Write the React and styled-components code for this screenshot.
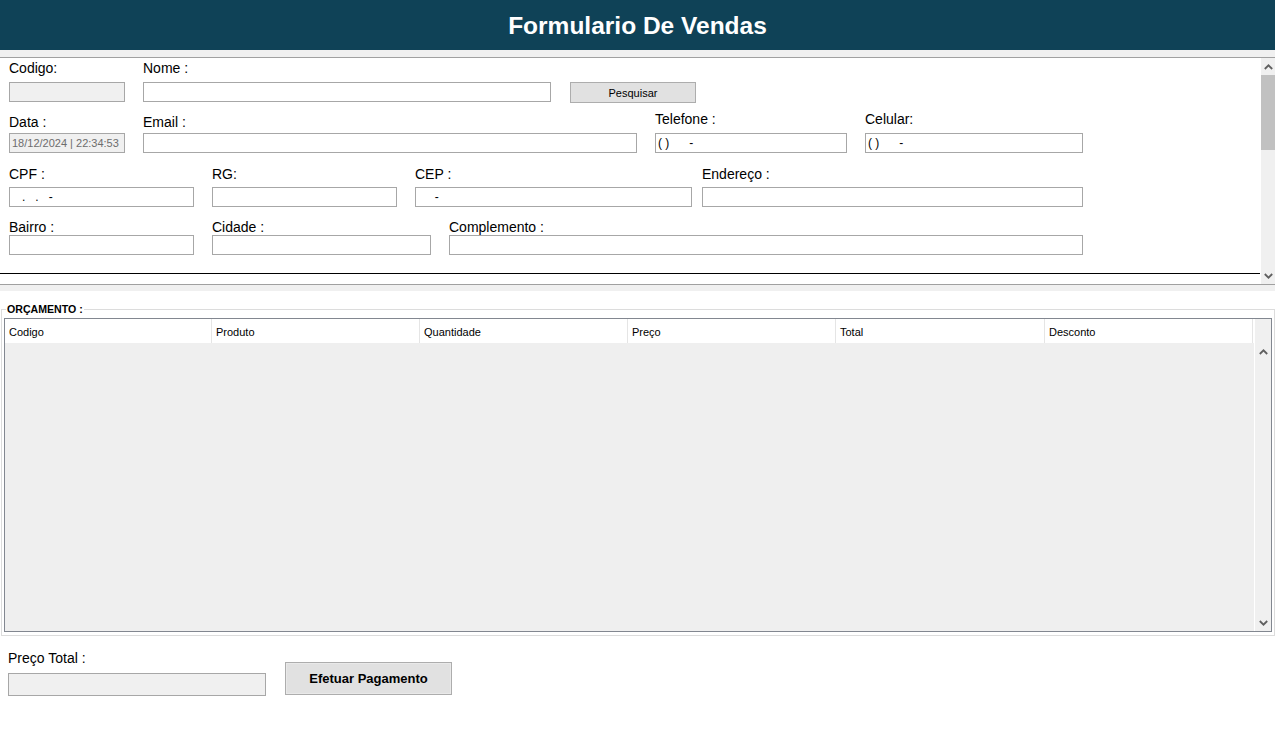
import React from "react";
import styled, { createGlobalStyle } from "styled-components";

const GlobalStyle = createGlobalStyle`
  html, body { margin: 0; padding: 0; background: #fff; }
  body { font-family: "Liberation Sans", Arial, sans-serif; color: #000; }
  * { box-sizing: border-box; }
`;

const Page = styled.div`
  display: flex;
  flex-direction: column;
  height: 733px;
  overflow: hidden;
  background: #fff;
`;

const Header = styled.header`
  height: 50px;
  flex: none;
  background: #0f4257;
  display: flex;
  align-items: center;
  justify-content: center;
`;

const Title = styled.h1`
  margin: 0;
  padding-top: 2px;
  color: #fff;
  font-family: "Liberation Sans", Arial, sans-serif;
  font-weight: 700;
  font-size: 24.5px;
  line-height: 28px;
`;

const Strip = styled.div`
  height: ${(p) => p.$h}px;
  flex: none;
  background: #f0f0f0;
`;

const Panel = styled.section`
  height: 228px;
  flex: none;
  display: flex;
  background: #fff;
  border-top: 1px solid #a0a0a0;
  border-bottom: 1px solid #a0a0a0;
`;

const FormArea = styled.div`
  flex: 1;
  min-width: 0;
  display: flex;
  flex-direction: column;
  padding-top: 2px;
`;

const Row = styled.div`
  display: flex;
  align-items: ${(p) => p.$align || "flex-end"};
  gap: 18px;
  padding-left: 9px;
  margin-top: ${(p) => p.$mt || 0}px;
`;

const Field = styled.div`
  display: flex;
  flex-direction: column;
  flex: none;
  width: ${(p) => p.$w}px;
  margin-left: ${(p) => p.$ml || 0}px;
`;

const Label = styled.label`
  font-size: 14px;
  line-height: 16px;
  height: 16px;
  white-space: nowrap;
  margin-bottom: ${(p) => p.$gap || 0}px;
`;

const TextBox = styled.input`
  display: block;
  width: 100%;
  height: ${(p) => p.$h || 20}px;
  margin: 0;
  padding: 0 1px 0 2px;
  border: 1px solid #a7a7a7;
  border-radius: 0;
  outline: none;
  background: ${(p) => (p.$disabled ? "#f0f0f0" : "#fff")};
  color: ${(p) => (p.$disabled ? "#6d6d6d" : "#000")};
  font-family: "Liberation Sans", Arial, sans-serif;
  font-size: ${(p) => p.$fs || 12}px;
`;

const SmallButton = styled.button`
  flex: none;
  width: 126px;
  height: 21px;
  margin: 22px 0 0 1px;
  padding: 0;
  background: #e1e1e1;
  border: 1px solid #adadad;
  border-radius: 0;
  font-family: "Liberation Sans", Arial, sans-serif;
  font-size: 11px;
  color: #000;
`;

const Divider = styled.div`
  height: 1px;
  margin: 18px 1px 0 0;
  background: #000;
`;

const VScroll = styled.div`
  width: ${(p) => p.$w}px;
  flex: none;
  display: flex;
  flex-direction: column;
  background: #f0f0f0;
  border-left: ${(p) => (p.$line ? "1px solid #fff" : "none")};
`;

const ArrowBox = styled.div`
  height: 17px;
  flex: none;
  display: flex;
  align-items: center;
  justify-content: center;
`;

const Thumb = styled.div`
  height: 75px;
  flex: none;
  background: #c1c1c1;
`;

const Track = styled.div`
  flex: 1;
`;

const HeadFiller = styled.div`
  height: 24px;
  flex: none;
  background: #f0f0f0;
`;

const GroupWrap = styled.div`
  height: 345px;
  flex: none;
  padding: 12px 0 0 1px;
  background: #fff;
`;

const GroupBox = styled.fieldset`
  height: 333px;
  margin: 0;
  padding: 2px 2px 3px 2px;
  border: 1px solid #dcdcdc;
  min-width: 0;
`;

const Legend = styled.legend`
  margin-left: 2px;
  padding: 0 1px;
  font-size: 10.6px;
  line-height: 13px;
  font-weight: 700;
`;

const Grid = styled.div`
  height: 314px;
  display: flex;
  border: 1px solid #828790;
  background: #efefef;
`;

const GridMain = styled.div`
  flex: 1;
  min-width: 0;
  display: flex;
  flex-direction: column;
`;

const HeaderRow = styled.div`
  height: 24px;
  flex: none;
  display: flex;
  background: #fff;
`;

const HeadCell = styled.div`
  width: ${(p) => p.$w}px;
  flex: none;
  height: 24px;
  padding: 1px 0 0 4px;
  font-size: 11px;
  line-height: 24px;
  border-right: 1px solid #e5e5e5;
  white-space: nowrap;
`;

const GridBody = styled.div`
  flex: 1;
  background: #efefef;
`;

const Footer = styled.div`
  flex: 1;
  display: flex;
  align-items: flex-start;
  gap: 19px;
  padding: 14px 0 0 8px;
  background: #fff;
`;

const PayButton = styled.button`
  flex: none;
  width: 167px;
  height: 33px;
  margin: 12px 0 0 0;
  padding: 0;
  background: #e1e1e1;
  border: 1px solid #adadad;
  box-shadow: inset 0 0 0 1px #e9e9e9;
  border-radius: 0;
  font-family: "Liberation Sans", Arial, sans-serif;
  font-size: 13px;
  font-weight: 700;
  color: #000;
`;

const Chevron = ({ down }) => (
  <svg width="9" height="6" viewBox="0 0 9 6">
    <polyline
      points={down ? "0.8,1 4.5,4.7 8.2,1" : "0.8,5 4.5,1.3 8.2,5"}
      fill="none"
      stroke="#606060"
      strokeWidth="1.8"
    />
  </svg>
);

const columns = [
  ["Codigo", 207],
  ["Produto", 208],
  ["Quantidade", 208],
  ["Preço", 208],
  ["Total", 209],
  ["Desconto", 208],
];

export default function App() {
  return (
    <Page>
      <GlobalStyle />
      <Header>
        <Title>Formulario De Vendas</Title>
      </Header>
      <Strip $h={7} />
      <Panel>
        <FormArea>
          <Row $align="flex-start">
            <Field $w={116}>
              <Label $gap={6}>Codigo:</Label>
              <TextBox $disabled readOnly defaultValue="" />
            </Field>
            <Field $w={408}>
              <Label $gap={6}>Nome :</Label>
              <TextBox readOnly defaultValue="" />
            </Field>
            <SmallButton>Pesquisar</SmallButton>
          </Row>
          <Row $mt={8}>
            <Field $w={116}>
              <Label $gap={3}>Data :</Label>
              <TextBox $disabled $fs={11} readOnly defaultValue="18/12/2024 | 22:34:53" />
            </Field>
            <Field $w={494}>
              <Label $gap={3}>Email :</Label>
              <TextBox readOnly defaultValue="" />
            </Field>
            <Field $w={192}>
              <Label $gap={6}>Telefone :</Label>
              <TextBox readOnly defaultValue="( )      -" />
            </Field>
            <Field $w={218}>
              <Label $gap={6}>Celular:</Label>
              <TextBox readOnly defaultValue="( )      -" />
            </Field>
          </Row>
          <Row $mt={13}>
            <Field $w={185}>
              <Label $gap={5}>CPF :</Label>
              <TextBox readOnly defaultValue="   .   .   -" />
            </Field>
            <Field $w={185}>
              <Label $gap={5}>RG:</Label>
              <TextBox readOnly defaultValue="" />
            </Field>
            <Field $w={277}>
              <Label $gap={5}>CEP :</Label>
              <TextBox readOnly defaultValue="     -" />
            </Field>
            <Field $w={381} $ml={-8}>
              <Label $gap={5}>Endereço :</Label>
              <TextBox readOnly defaultValue="" />
            </Field>
          </Row>
          <Row $mt={12}>
            <Field $w={185}>
              <Label>Bairro :</Label>
              <TextBox readOnly defaultValue="" />
            </Field>
            <Field $w={219}>
              <Label>Cidade :</Label>
              <TextBox readOnly defaultValue="" />
            </Field>
            <Field $w={634}>
              <Label>Complemento :</Label>
              <TextBox readOnly defaultValue="" />
            </Field>
          </Row>
          <Divider />
        </FormArea>
        <VScroll $w={14}>
          <ArrowBox>
            <Chevron />
          </ArrowBox>
          <Thumb />
          <Track />
          <ArrowBox>
            <Chevron down />
          </ArrowBox>
        </VScroll>
      </Panel>
      <Strip $h={6} />
      <GroupWrap>
        <GroupBox>
          <Legend>ORÇAMENTO :</Legend>
          <Grid>
            <GridMain>
              <HeaderRow>
                {columns.map(([name, w]) => (
                  <HeadCell key={name} $w={w}>
                    {name}
                  </HeadCell>
                ))}
              </HeaderRow>
              <GridBody />
            </GridMain>
            <VScroll $w={17} $line>
              <HeadFiller />
              <ArrowBox>
                <Chevron />
              </ArrowBox>
              <Track />
              <ArrowBox>
                <Chevron down />
              </ArrowBox>
            </VScroll>
          </Grid>
        </GroupBox>
      </GroupWrap>
      <Footer>
        <Field $w={258}>
          <Label $gap={7}>Preço Total :</Label>
          <TextBox $disabled $h={23} readOnly defaultValue="" />
        </Field>
        <PayButton>Efetuar Pagamento</PayButton>
      </Footer>
    </Page>
  );
}
